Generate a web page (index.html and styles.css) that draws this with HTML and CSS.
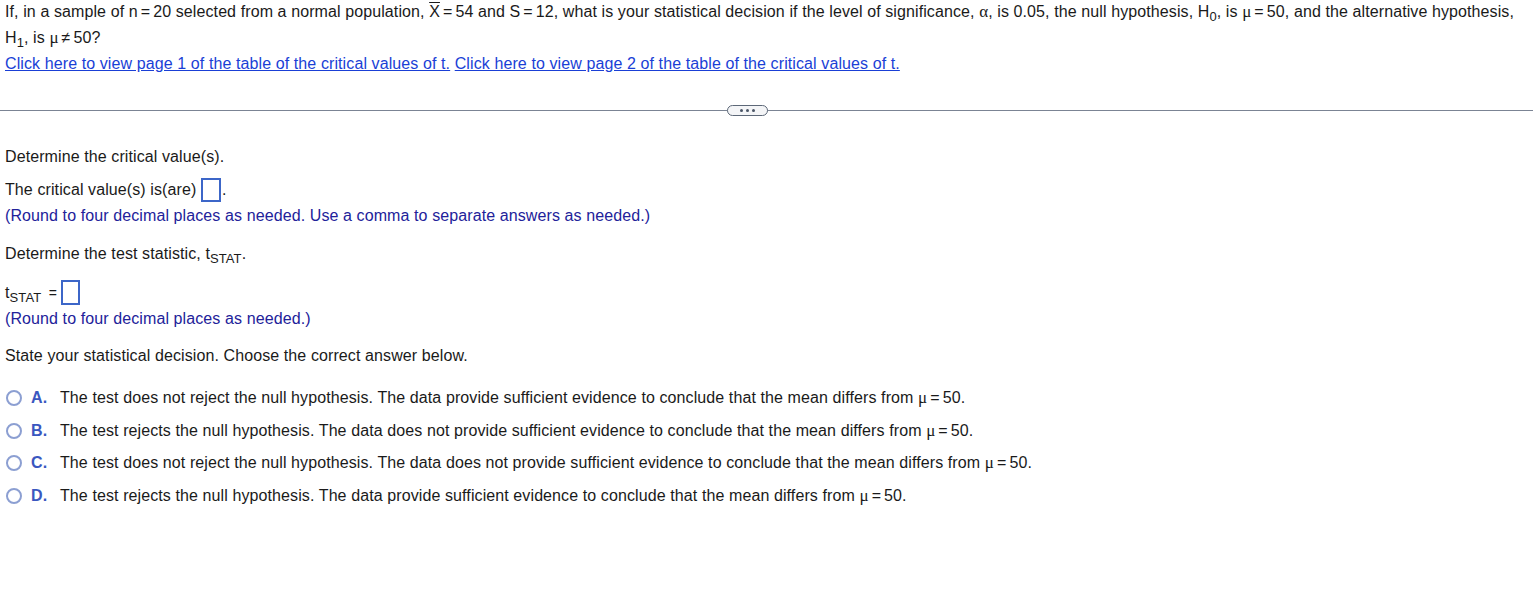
FILE: index.html
```html
<!DOCTYPE html>
<html>
<head>
<meta charset="utf-8">
<link rel="stylesheet" href="styles.css">
</head>
<body>
<div class="question">
  <p class="stem">If, in a sample of n<span class="eq">=</span>20 selected from a normal population, <span class="xbar">X</span><span class="eq">=</span>54 and S<span class="eq">=</span>12, what is your statistical decision if the level of significance, <span class="greek">α</span>, is 0.05, the null hypothesis, H<sub>0</sub>, is <span class="greek">μ</span><span class="eq">=</span>50, and the alternative hypothesis, H<sub>1</sub>, is <span class="greek">μ</span><span class="eq">≠</span>50?</p>
  <p class="links"><a href="#">Click here to view page 1 of the table of the critical values of t.</a> <a href="#">Click here to view page 2 of the table of the critical values of t.</a></p>
</div>
<div class="divider">
  <span class="more"><i></i><i></i><i></i></span>
</div>
<div class="answers">
  <p class="step">Determine the critical value(s).</p>
  <p class="line">The critical value(s) is(are) <span class="box"></span>.</p>
  <p class="note">(Round to four decimal places as needed. Use a comma to separate answers as needed.)</p>
  <p class="step step2">Determine the test statistic, t<sub>STAT</sub>.</p>
  <p class="line line2">t<sub>STAT</sub> <span class="eq">=</span><span class="box"></span></p>
  <p class="note">(Round to four decimal places as needed.)</p>
  <p class="step step3">State your statistical decision. Choose the correct answer below.</p>
  <ul class="options">
    <li><span class="radio"></span><span class="letter">A.</span><span class="otext">The test does not reject the null hypothesis. The data provide sufficient evidence to conclude that the mean differs from <span class="greek">μ</span><span class="eq">=</span>50.</span></li>
    <li><span class="radio"></span><span class="letter">B.</span><span class="otext">The test rejects the null hypothesis. The data does not provide sufficient evidence to conclude that the mean differs from <span class="greek">μ</span><span class="eq">=</span>50.</span></li>
    <li><span class="radio"></span><span class="letter">C.</span><span class="otext">The test does not reject the null hypothesis. The data does not provide sufficient evidence to conclude that the mean differs from <span class="greek">μ</span><span class="eq">=</span>50.</span></li>
    <li><span class="radio"></span><span class="letter">D.</span><span class="otext">The test rejects the null hypothesis. The data provide sufficient evidence to conclude that the mean differs from <span class="greek">μ</span><span class="eq">=</span>50.</span></li>
  </ul>
</div>
</body>
</html>
```
FILE: styles.css
```css
html, body {
  margin: 0;
  padding: 0;
  background: #ffffff;
}
body {
  font-family: "Liberation Sans", Arial, sans-serif;
  font-size: 16px;
  letter-spacing: 0.1px;
  color: #1a1a1a;
  width: 1538px;
}
p { margin: 0; }
.question {
  padding: 0 5px;
}
.stem {
  line-height: 26px;
  margin-top: -1px;
}
.links {
  line-height: 26px;
}
.links a {
  color: #1a3fd6;
  text-decoration: underline;
}
sub {
  font-size: 13px;
  vertical-align: -4px;
  line-height: 0;
}
.eq {
  margin: 0 3px;
}
.greek {
  font-family: "Liberation Serif", serif;
  font-size: 17px;
}
.xbar {
  text-decoration: overline;
}
.divider {
  margin: 33px 5px 0 0;
  height: 1px;
  background: #7b8494;
  position: relative;
}
.more {
  position: absolute;
  top: -5px;
  left: 727px;
  width: 39px;
  height: 9px;
  border: 1px solid #5d6878;
  border-radius: 6px;
  background: #f4f5f7;
  display: flex;
  align-items: center;
  justify-content: center;
  gap: 3px;
}
.more i {
  width: 3px;
  height: 3px;
  border-radius: 50%;
  background: #4a5566;
}
.answers {
  padding: 0 5px;
}
.step {
  line-height: 20px;
  margin-top: 36px;
}
.line {
  line-height: 24px;
  margin-top: 11px;
}
.box {
  display: inline-block;
  box-sizing: border-box;
  width: 20px;
  height: 24px;
  border: 2px solid #3c66c8;
  margin-left: 0;
  margin-right: 1px;
  vertical-align: middle;
  position: relative;
  top: -1px;
}
.line2 {
  line-height: 26px;
  margin-top: 16px;
}
.line2 .eq { margin: 0 4px 0 3px; font-size: 14px; }
.line2 .box { width: 19px; height: 25px; }
.note {
  color: #22229a;
  line-height: 20px;
  margin-top: 3px;
}
.step2 { margin-top: 18px; }
.step3 { margin-top: 17px; }
.options {
  list-style: none;
  margin: 15.6px 0 0 0;
  padding: 0;
}
.options li {
  display: flex;
  align-items: center;
  height: 32.7px;
}
.radio {
  box-sizing: border-box;
  width: 16px;
  height: 16px;
  border: 2px solid #8c9fd2;
  border-radius: 50%;
  margin-left: 1px;
  flex: none;
}
.letter {
  color: #3a57c0;
  font-weight: bold;
  width: 29px;
  margin-left: 9px;
}
.otext {
  color: #1a1a1a;
}
```
